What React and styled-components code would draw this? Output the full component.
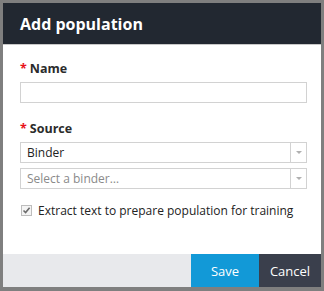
import styled, { createGlobalStyle } from 'styled-components';

const Global = createGlobalStyle`
  html, body { margin: 0; padding: 0; background: #fff; }
  body { font-family: "Open Sans", "Noto Sans", sans-serif; }
`

const Frame = styled.div`
  width: 324px;
  height: 291px;
  box-sizing: border-box;
  border: 3px solid #7f7f7f;
  border-bottom-width: 4px;
  display: flex;
  flex-direction: column;
  background: #fff;
`

const Header = styled.div`
  height: 41px;
  background: #222831;
  border-bottom: 1px solid #c8c8c8;
  display: flex;
  align-items: center;
  padding-left: 17px;
  color: #fff;
  font-weight: 700;
  font-size: 16px;
`

const Body = styled.div`
  flex: 1;
  padding: 15px 14px 0 17px;
  display: flex;
  flex-direction: column;
`

const Label = styled.div`
  font-size: 12.5px;
  font-weight: 700;
  color: #2b2b2b;
  height: 18px;
  line-height: 18px;
  margin-bottom: ${p => p.gap || 4}px;
  span { color: #e8101a; margin-right: 3px; }
`

const TextInput = styled.div`
  border: 1px solid #d2d2d2;
  box-sizing: border-box;
  height: 21px;
  margin-bottom: ${p => p.gap || 0}px;
`

const Select = styled.div`
  height: 21px;
  box-sizing: border-box;
  border: 1px solid #d2d2d2;
  display: flex;
  align-items: center;
  margin-bottom: ${p => p.gap || 0}px;
`

const SelectText = styled.div`
  flex: 1;
  padding-left: 6px;
  font-size: 12px;
  color: ${p => p.placeholder ? '#8a8a8a' : '#222'};
`

const Arrow = styled.div`
  width: 15px;
  height: 100%;
  border-left: 1px solid #d2d2d2;
  display: flex;
  align-items: center;
  justify-content: center;
  &::after {
    content: '';
    border-left: 3px solid transparent;
    border-right: 3px solid transparent;
    border-top: 3px solid #b0b0b0;
  }
`

const CheckRow = styled.div`
  display: flex;
  align-items: center;
  gap: 6px;
  font-size: 12px;
  color: #222;
  margin-top: 13px;
`

const Box = styled.div`
  width: 11px;
  height: 11px;
  box-sizing: border-box;
  border: 1px solid #bdbdbd;
  background: #f4f4f4;
  margin-left: 1px;
  display: flex;
  align-items: center;
  justify-content: center;
`

const Footer = styled.div`
  height: 33px;
  background: #e8e9ec;
  display: flex;
  justify-content: flex-end;
`

const Button = styled.div`
  width: ${p => p.w}px;
  background: ${p => p.bg};
  color: #fff;
  font-size: 13px;
  display: flex;
  align-items: center;
  justify-content: center;
`

export default function App() {
  return (
    <>
      <Global />
      <Frame>
        <Header>Add population</Header>
        <Body>
          <Label><span>*</span>Name</Label>
          <TextInput gap={17} />
          <Label gap={4}><span>*</span>Source</Label>
          <Select gap={5}>
            <SelectText>Binder</SelectText>
            <Arrow />
          </Select>
          <Select>
            <SelectText placeholder="1">Select a binder…</SelectText>
            <Arrow />
          </Select>
          <CheckRow>
            <Box>
              <svg width="9" height="9" viewBox="0 0 9 9">
                <path d="M1.5 4.5 L3.6 6.6 L7.6 1.8" fill="none" stroke="#6b6b6b" strokeWidth="1.6" />
              </svg>
            </Box>
            Extract text to prepare population for training
          </CheckRow>
        </Body>
        <Footer>
          <Button w={68} bg="#1299d7">Save</Button>
          <Button w={62} bg="#3a3f4c">Cancel</Button>
        </Footer>
      </Frame>
    </>
  )
}
